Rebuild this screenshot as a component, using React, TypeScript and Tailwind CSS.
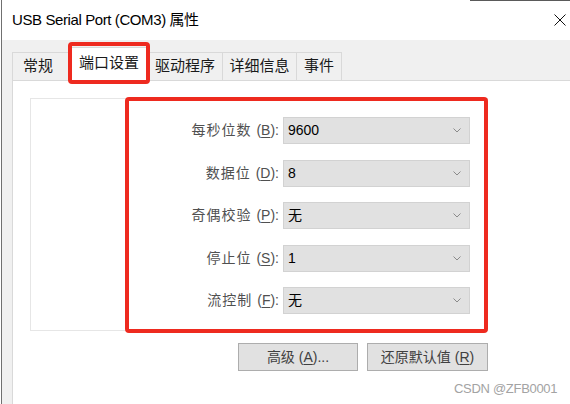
import React from 'react';

const font = { fontFamily: '"Liberation Sans", "Noto Sans CJK SC", sans-serif' };

const rows = [
  { label: '每秒位数', key: 'B', value: '9600' },
  { label: '数据位', key: 'D', value: '8' },
  { label: '奇偶校验', key: 'P', value: '无' },
  { label: '停止位', key: 'S', value: '1' },
  { label: '流控制', key: 'F', value: '无' },
];

function Chevron() {
  return (
    <svg width="8" height="5" viewBox="0 0 8 5" className="shrink-0">
      <polyline points="0.5,0.5 4,4 7.5,0.5" fill="none" stroke="#8a8a8a" strokeWidth="1" />
    </svg>
  );
}

function Combo({ value }: { value: string }) {
  return (
    <div className="w-[187px] h-[27px] bg-[#e1e1e1] border border-[#d2d2d2] flex items-center justify-between pl-[4px] pr-[8px]">
      <span className="text-[14px] text-black">{value}</span>
      <Chevron />
    </div>
  );
}

export default function App() {
  return (
    <div className="w-[570px] h-[404px] bg-white pl-[1px] relative overflow-hidden" style={font}>
      <div className="h-full border-l border-[#707070] flex flex-col">
        {/* title bar */}
        <div className="h-[40px] shrink-0 bg-white flex items-center justify-between pl-[10px] pr-[4px]">
          <span className="text-[15px] text-black tracking-[-0.4px]">USB Serial Port (COM3) 属性</span>
          <svg width="12" height="12" viewBox="0 0 12 12">
            <path d="M0.5 0.5 L11.5 11.5 M11.5 0.5 L0.5 11.5" stroke="#111" strokeWidth="1" />
          </svg>
        </div>

        <div className="flex-1 bg-[#f0f0f0] flex flex-col">
          {/* tabs */}
          <div className="h-[40px] shrink-0 flex items-end pl-[10px] text-[15px] text-[#1a1a1a]">
            <div className="w-[58px] h-[28px] flex items-center pl-[10px] border-t border-l border-[#d9d9d9]">常规</div>
            <div className="relative z-10 w-[78px] h-[34px] -mb-[1px] bg-white border-t border-x border-[#d9d9d9] flex items-center justify-center pb-[3px]">
              端口设置
            </div>
            <div className="w-[75px] h-[28px] flex items-center justify-center border-t border-r border-[#d9d9d9]">驱动程序</div>
            <div className="w-[74px] h-[28px] flex items-center justify-center border-t border-r border-[#d9d9d9]">详细信息</div>
            <div className="w-[45px] h-[28px] flex items-center justify-center border-t border-r border-[#d9d9d9]">事件</div>
          </div>

          {/* panel */}
          <div className="flex-1 ml-[10px] bg-white border-t border-l border-[#d9d9d9] pl-[17px] pt-[17px]">
            <div className="w-[458px] flex flex-col">
              <div className="h-[233px] border border-[#e6e6e6] flex flex-col pt-[18px] pr-[17px] gap-[15.5px]">
                {rows.map((r) => (
                  <div key={r.key} className="flex items-center justify-end gap-[4px]">
                    <span className="text-[14px] text-[#505050] tracking-[1px]">
                      {r.label} <span className="tracking-normal">(<u className="underline-offset-2">{r.key}</u>):</span>
                    </span>
                    <Combo value={r.value} />
                  </div>
                ))}
              </div>
              <div className="flex justify-end gap-[9px] mt-[12px]">
                <button className="w-[120px] h-[28px] bg-[#e1e1e1] border border-[#adadad] text-[14px] text-[#404040]">
                  高级 (<u className="underline-offset-2">A</u>)...
                </button>
                <button className="w-[121px] h-[28px] bg-[#e1e1e1] border border-[#adadad] text-[14px] text-[#404040]">
                  还原默认值 (<u className="underline-offset-2">R</u>)
                </button>
              </div>
            </div>
          </div>
        </div>
      </div>

      {/* annotation overlays */}
      <div className="absolute left-[68px] top-[42px] w-[82px] h-[42px] border-[4px] border-[#ee2a1f] rounded-[4px] z-20" />
      <div className="absolute left-[125px] top-[97px] w-[363px] h-[236px] border-[4px] border-[#ee2a1f] rounded-[4px] z-20" />
      <div className="absolute left-[470px] top-0 w-[100px] h-[1px] bg-[#5a5a5a]" />
      <span className="absolute left-[454px] top-[379px] text-[13px] text-[#a3a3a3] tracking-[-0.3px]">CSDN @ZFB0001</span>
    </div>
  );
}
